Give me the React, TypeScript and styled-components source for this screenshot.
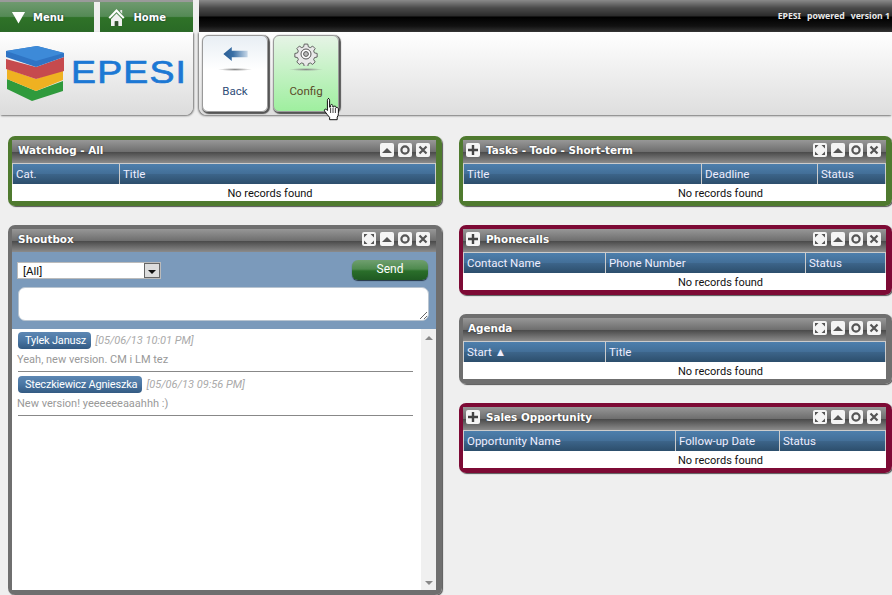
import React from 'react';
import styled, { createGlobalStyle } from 'styled-components';

const GlobalStyle = createGlobalStyle`
  html, body {
    margin: 0;
    height: 595px;
    overflow: hidden;
    background: #efefef;
    font-family: Roboto, "Noto Sans", sans-serif;
    font-size: 11.5px;
  }
  * { box-sizing: border-box; }
`;

const Page = styled.div`
  position: relative;
  width: 892px;
  height: 595px;
  overflow: hidden;
`;

const Top = styled.div`
  display: flex;
  height: 115px;
`;

const LeftTop = styled.div`
  width: 193px;
  display: flex;
  flex-direction: column;
`;

const Tabs = styled.div`
  display: grid;
  grid-template-columns: 1fr 1fr;
  gap: 6px;
  height: 32px;
  padding-top: 2px;
  background: linear-gradient(#9a9a9a 0, #9a9a9a 2px, #efefef 2px);
`;

const Tab = styled.div`
  display: flex;
  align-items: center;
  gap: ${p => p.$gap}px;
  padding-left: ${p => p.$pad}px;
  color: #fff;
  font: bold 10px "DejaVu Sans", sans-serif;
  text-shadow: 0 0 2px #123;
  background: linear-gradient(#6f9a6f 0, #548a55 48%, #2f7228 52%, #2a6a26 100%);
`;

const LogoCard = styled.div`
  flex: 1;
  display: flex;
  align-items: center;
  gap: 5px;
  padding-left: 6px;
  border-radius: 0 0 8px 0;
  background: linear-gradient(#ffffff, #dcdcdc);
  box-shadow: 1px 1px 2px #777;
`;

const LogoText = styled.span`
  font: 32px/1 "Liberation Sans", sans-serif;
  -webkit-text-stroke: 0.7px #1c78d4;
  letter-spacing: 1px;
  margin-top: -3px;
  transform: scaleX(1.17);
  transform-origin: left center;
  color: #1c78d4;
`;

const RightTop = styled.div`
  flex: 1;
  margin-left: 6px;
  display: flex;
  flex-direction: column;
`;

const BlackBar = styled.div`
  height: 32px;
  display: flex;
  align-items: center;
  justify-content: flex-end;
  padding: 0 2px 0 0;
  gap: 6px;
  color: #e8e8e8;
  font: bold 8.7px "Noto Sans", sans-serif;
  white-space: nowrap;
  background: linear-gradient(#8a8a8a 0, #4a4a4a 8px, #2a2a2a 16px, #000 17px, #111 26px, #333 32px);
`;

const Toolbar = styled.div`
  flex: 1;
  display: flex;
  gap: 5px;
  padding: 3px;
  border-radius: 0 0 0 8px;
  background: linear-gradient(#ffffff, #dedede);
  box-shadow: -1px 1px 2px #777;
`;

const ToolButton = styled.div`
  width: 66px;
  height: 77px;
  display: flex;
  flex-direction: column;
  align-items: center;
  border: 1px solid #9a9a9a;
  border-radius: 6px;
  box-shadow: 1px 1px 1px 1px #555;
  color: ${p => (p.$active ? '#5a4a28' : '#2f4d78')};
  background: ${p => (p.$active ? 'linear-gradient(#e6f4e6, #9fef9f)' : 'linear-gradient(#e8eef4, #ffffff 45%)')};
`;

const ToolIcon = styled.div`
  height: 26px;
  margin-top: 5px;
  display: flex;
  align-items: center;
`;

const ToolShade = styled.div`
  width: 34px;
  height: 3px;
  margin-top: 1px;
  background: radial-gradient(ellipse at center, #888 0, rgba(136, 136, 136, 0) 70%);
`;

const ToolLabel = styled.div`
  margin-top: 13px;
`;

const Cursor = styled.svg`
  position: absolute;
  left: 323px;
  top: 97px;
`;

const Columns = styled.div`
  display: flex;
  gap: 17px;
  padding: 21px 0 0 8px;
`;

const Column = styled.div`
  width: ${p => p.$w}px;
  display: flex;
  flex-direction: column;
  gap: 19px;
`;

const Box = styled.div`
  height: ${p => p.$h}px;
  display: flex;
  flex-direction: column;
  border: 4px solid ${p => p.$color};
  border-right-width: 6px;
  border-bottom-width: 5px;
  border-radius: 7px;
  box-shadow: 1px 1px 1px #555;
`;

const BoxHead = styled.div`
  height: 23px;
  flex: none;
  display: flex;
  align-items: center;
  gap: 4px;
  padding: 0 ${p => p.$right}px 3px ${p => p.$left}px;
  color: #fff;
  background: linear-gradient(#979797 0, #6f6f6f 50%, #4c4c4c 54%, #8b8b8b 100%);
`;

const BoxTitle = styled.div`
  flex: 1;
  font: bold 10.4px "DejaVu Sans", sans-serif;
  text-shadow: 0 0 2px #333;
  margin-left: ${p => (p.$plus ? 2 : 0)}px;
`;

const HeadButton = styled.div`
  width: 14px;
  height: 14px;
  display: flex;
  align-items: center;
  justify-content: center;
  border-radius: 2px;
  background: #f4f4f4;
`;

const TableHead = styled.div`
  display: grid;
  grid-template-columns: ${p => p.$cols};
  height: 21px;
  flex: none;
  border-top: 1px solid #ccc;
  border-left: 1px solid #ccc;
  background: linear-gradient(#4d7fad 0, #436f98 48%, #3c6489 52%, #2c4e6c 100%);
`;

const TableCell = styled.div`
  padding-left: 3px;
  color: #eef;
  line-height: 20px;
  border-right: 1px solid #ccc;
`;

const EmptyRow = styled.div`
  flex: 1;
  padding: 2px 0 0 92px;
  text-align: center;
  color: #111;
  background: #fff;
  font-size: 11px;
  line-height: 15px;
`;

const ShoutForm = styled.div`
  height: 77px;
  flex: none;
  padding: 8px 6px 0 5px;
  background: #7b9abb;
  display: flex;
  flex-direction: column;
  gap: 7px;
`;

const ShoutRow = styled.div`
  display: flex;
  justify-content: space-between;
  align-items: flex-start;
  height: 20px;
`;

const FakeSelect = styled.div`
  width: 144px;
  height: 17px;
  margin-top: 2px;
  display: flex;
  justify-content: space-between;
  padding-left: 5px;
  line-height: 16px;
  color: #111;
  background: #fff;
  border: 1px solid #bbb;
`;

const SelectArrow = styled.div`
  width: 16px;
  display: flex;
  align-items: center;
  justify-content: center;
  border: 1px solid #666;
  background: #ddd;
  &::after {
    content: '';
    margin-top: 3px;
    border-left: 4px solid transparent;
    border-right: 4px solid transparent;
    border-top: 4px solid #111;
  }
`;

const SendButton = styled.div`
  width: 76px;
  height: 20px;
  margin-right: 2px;
  text-align: center;
  line-height: 19px;
  font-size: 12px;
  color: #fff;
  border-radius: 6px;
  box-shadow: 0 1px 1px #234;
  background: linear-gradient(#6f9f6f 0, #4f8a4f 45%, #2a6e2a 55%, #1f5a22 100%);
`;

const ShoutInput = styled.textarea`
  display: block;
  width: 411px;
  height: 34px;
  margin: 0 0 0 1px;
  border: 1px solid #b8c4d0;
  border-radius: 7px;
  background: #fff;
  resize: both;
  outline: none;
`;

const ShoutBody = styled.div`
  flex: 1;
  display: flex;
  background: #fff;
  min-height: 0;
  font-size: 11px;
`;

const ShoutList = styled.div`
  flex: 1;
  padding: 3px 6px 0 6px;
`;

const Message = styled.div`
  height: 44px;
`;

const MessageHead = styled.div`
  display: flex;
  align-items: center;
  gap: 4px;
  height: 17px;
`;

const NamePill = styled.span`
  padding: 0 5px 0 7px;
  height: 17px;
  line-height: 18px;
  color: #fff;
  letter-spacing: -0.2px;
  border-radius: 4px;
  background: linear-gradient(#5d87b3 0, #4a76a3 50%, #335a82 100%);
`;

const MessageDate = styled.span`
  color: #aaa;
  font-style: italic;
`;

const MessageText = styled.div`
  color: #999;
  margin: 2px 0 3px -1px;
  line-height: 17px;
`;

const Rule = styled.div`
  width: 395px;
  height: 1px;
  background: #888;
`;

const ScrollTrack = styled.div`
  width: 15px;
  display: flex;
  flex-direction: column;
  justify-content: space-between;
  align-items: center;
  padding: 7px 0 5px;
  background: #f0f0f0;
`;

const ScrollArrow = styled.div`
  width: 0;
  height: 0;
  border-left: 4px solid transparent;
  border-right: 4px solid transparent;
  ${p => (p.$up ? 'border-bottom: 4px solid #888;' : 'border-top: 4px solid #888;')}
`;

const Triangle = ({ size, color = '#fff' }: { size: number; color?: string }) => (
  <svg width={size} height={size} viewBox="0 0 16 14">
    <path d="M1 1h14L8 13.5z" fill={color} />
  </svg>
);

const HomeIcon = () => (
  <svg width="17" height="19" viewBox="0 0 18 20">
    <path d="M9 1L0.5 10l1.6 1.3L9 4.2l6.9 7.1 1.6-1.3z" fill="#fff" />
    <path d="M3.2 11.5L9 5.8l5.8 5.7V19h-4v-5H7.2v5h-4z" fill="#f2f2f2" />
    <path d="M7.2 14h3.6v5H7.2z" fill="#33502f" />
    <path d="M13 2h2v4l-2-2z" fill="#e6e6e6" />
  </svg>
);

const BackArrow = () => (
  <svg width="25" height="14" viewBox="0 0 26 15">
    <defs>
      <linearGradient id="backfade" x1="0" x2="1" y1="0" y2="0">
        <stop offset="0" stopColor="#2b5f96" />
        <stop offset="0.4" stopColor="#3a6fa5" />
        <stop offset="1" stopColor="#c8d8e8" />
      </linearGradient>
    </defs>
    <path d="M0 7.5L9 0v4h17v7H9v4z" fill="url(#backfade)" />
  </svg>
);

const GearIcon = () => (
  <svg width="24" height="24" viewBox="0 0 24 24" fill="#e8e8e8" stroke="#555" strokeWidth="1">
    <path d="M10 1h4l.6 3 2.2.9 2.6-1.7 2.8 2.8-1.7 2.6.9 2.2 3 .6v4l-3 .6-.9 2.2 1.7 2.6-2.8 2.8-2.6-1.7-2.2.9-.6 3h-4l-.6-3-2.2-.9-2.6 1.7-2.8-2.8 1.7-2.6-.9-2.2-3-.6v-4l3-.6.9-2.2-1.7-2.6 2.8-2.8 2.6 1.7 2.2-.9z" transform="translate(1.2 1.2) scale(0.9)" />
    <circle cx="12" cy="12" r="5" fill="#fff" />
    <circle cx="12" cy="12" r="2.4" fill="#bbb" />
  </svg>
);

const HandCursor = () => (
  <Cursor width="18" height="24" viewBox="0 0 18 24">
    <path
      d="M5 1.5c1 0 1.6.7 1.6 1.7v7l1-.2V8.5c0-1.4 2-1.4 2.2 0V10l1-.1c.2-1.2 2-1.2 2.2.1v.6l.8-.1c.9-.1 1.6.5 1.6 1.6v4.6c0 1.3-.5 2.4-1.2 3.4v2.6H6.6v-2.3c-1.8-1.8-3-3.8-5-6.3-.9-1.3.6-2.6 1.8-1.6l1 1V3.2c0-1 .7-1.7 1.6-1.7z"
      fill="#fff"
      stroke="#111"
      strokeWidth="1"
    />
    <path d="M7.6 11v5M10 11v5M12.4 11v5" stroke="#111" strokeWidth="0.8" />
  </Cursor>
);

const StackLogo = () => (
  <svg width="60" height="57" viewBox="7 46 60 57">
    <path d="M8 80l29 12 27-10v10l-31 10-25-12z" fill="#2f9a3c" />
    <path d="M8 70l29 10 27-10v11l-27 11-29-12z" fill="#efb121" />
    <path d="M7 60l30 8 28-10v14l-28 8-30-10z" fill="#c64a4e" />
    <path d="M7 52l31-5 27 7v4l-28 10-30-10z" fill="#2f74c4" />
    <path d="M7 52l31-5 27 7-28 8z" fill="#3d8ad8" />
  </svg>
);

const FullIcon = () => (
  <svg width="14" height="14" viewBox="0 0 14 14" fill="#555">
    <path d="M2 2h3.5L2 5.5zM12 2v3.5L8.5 2zM2 12V8.5L5.5 12zM12 12H8.5L12 8.5z" />
  </svg>
);

const UpIcon = () => (
  <svg width="10" height="5" viewBox="0 0 10 5">
    <path d="M5 0l5 5H0z" fill="#555" />
  </svg>
);

const RingIcon = () => (
  <svg width="12" height="12" viewBox="0 0 12 12">
    <circle cx="6" cy="6" r="3.6" fill="none" stroke="#555" strokeWidth="2.2" />
  </svg>
);

const CloseIcon = () => (
  <svg width="12" height="12" viewBox="0 0 12 12">
    <path d="M2.5 2.5l7 7M9.5 2.5l-7 7" stroke="#555" strokeWidth="2.2" />
  </svg>
);

const PlusIcon = () => (
  <svg width="12" height="12" viewBox="0 0 12 12">
    <path d="M6 1v10M1 6h10" stroke="#444" strokeWidth="2.4" />
  </svg>
);

const GREEN = '#4f7a2f';
const CRIMSON = '#7d0a35';
const GRAY = '#6f6f6f';

type WidgetProps = {
  title: string;
  color: string;
  plus?: boolean;
  expand?: boolean;
  leftColumn?: boolean;
  height?: number;
  cols?: string;
  headers?: string[];
  children?: React.ReactNode;
};

const Widget = ({ title, color, plus, expand = true, leftColumn, height = 70, cols, headers, children }: WidgetProps) => (
  <Box $color={color} $h={height}>
    <BoxHead $left={plus ? 3 : leftColumn ? 6 : 5} $right={leftColumn ? 6 : 5}>
      {plus && (
        <HeadButton>
          <PlusIcon />
        </HeadButton>
      )}
      <BoxTitle $plus={plus}>{title}</BoxTitle>
      {expand && (
        <HeadButton>
          <FullIcon />
        </HeadButton>
      )}
      <HeadButton>
        <UpIcon />
      </HeadButton>
      <HeadButton>
        <RingIcon />
      </HeadButton>
      <HeadButton>
        <CloseIcon />
      </HeadButton>
    </BoxHead>
    {headers && (
      <>
        <TableHead $cols={cols}>
          {headers.map(h => (
            <TableCell key={h}>{h}</TableCell>
          ))}
        </TableHead>
        <EmptyRow>No records found</EmptyRow>
      </>
    )}
    {children}
  </Box>
);

export default function App() {
  return (
    <Page>
      <GlobalStyle />
      <Top>
        <LeftTop>
          <Tabs>
            <Tab $pad={11} $gap={7}>
              <Triangle size={15} />
              Menu
            </Tab>
            <Tab $pad={8} $gap={9}>
              <HomeIcon />
              Home
            </Tab>
          </Tabs>
          <LogoCard>
            <StackLogo />
            <LogoText>EPESI</LogoText>
          </LogoCard>
        </LeftTop>
        <RightTop>
          <BlackBar>
            <span>EPESI</span>
            <span>powered</span>
            <span>version 1</span>
          </BlackBar>
          <Toolbar>
            <ToolButton>
              <ToolIcon>
                <BackArrow />
              </ToolIcon>
              <ToolShade />
              <ToolLabel>Back</ToolLabel>
            </ToolButton>
            <ToolButton $active>
              <ToolIcon>
                <GearIcon />
              </ToolIcon>
              <ToolShade />
              <ToolLabel>Config</ToolLabel>
            </ToolButton>
          </Toolbar>
        </RightTop>
      </Top>
      <HandCursor />
      <Columns>
        <Column $w={434}>
          <Widget title="Watchdog - All" color={GREEN} leftColumn expand={false} cols="107px 1fr" headers={['Cat.', 'Title']} />
          <Widget title="Shoutbox" color={GRAY} leftColumn height={370}>
            <ShoutForm>
              <ShoutRow>
                <FakeSelect>
                  [All]
                  <SelectArrow />
                </FakeSelect>
                <SendButton>Send</SendButton>
              </ShoutRow>
              <ShoutInput readOnly />
            </ShoutForm>
            <ShoutBody>
              <ShoutList>
                <Message>
                  <MessageHead>
                    <NamePill>Tylek Janusz</NamePill>
                    <MessageDate>[05/06/13 10:01 PM]</MessageDate>
                  </MessageHead>
                  <MessageText>Yeah, new version. CM i LM tez</MessageText>
                  <Rule />
                </Message>
                <Message>
                  <MessageHead>
                    <NamePill>Steczkiewicz Agnieszka</NamePill>
                    <MessageDate>[05/06/13 09:56 PM]</MessageDate>
                  </MessageHead>
                  <MessageText>New version! yeeeeeeaaahhh :)</MessageText>
                  <Rule />
                </Message>
              </ShoutList>
              <ScrollTrack>
                <ScrollArrow $up />
                <ScrollArrow />
              </ScrollTrack>
            </ShoutBody>
          </Widget>
        </Column>
        <Column $w={433}>
          <Widget title="Tasks - Todo - Short-term" color={GREEN} plus cols="238px 116px 1fr" headers={['Title', 'Deadline', 'Status']} />
          <Widget title="Phonecalls" color={CRIMSON} plus cols="142px 200px 1fr" headers={['Contact Name', 'Phone Number', 'Status']} />
          <Widget title="Agenda" color={GRAY} cols="142px 1fr" headers={['Start ▲', 'Title']} />
          <Widget title="Sales Opportunity" color={CRIMSON} plus cols="212px 104px 1fr" headers={['Opportunity Name', 'Follow-up Date', 'Status']} />
        </Column>
      </Columns>
    </Page>
  );
}
